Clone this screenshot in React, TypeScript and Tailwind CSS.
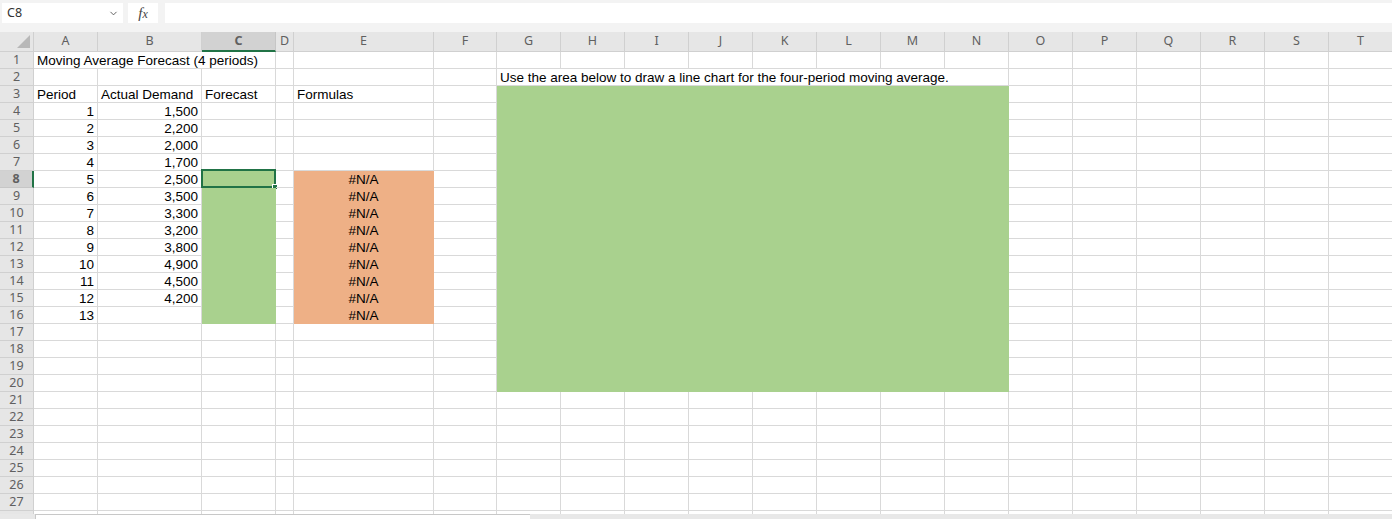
import {ChevronDown} from 'lucide-react';
import type {ReactNode} from 'react';

interface Column {
  label: string;
  width: number;
}

const columns: Column[] = [
  {label: 'A', width: 64},
  {label: 'B', width: 104},
  {label: 'C', width: 74},
  {label: 'D', width: 18},
  {label: 'E', width: 140},
  {label: 'F', width: 63},
  ...'GHIJKLMNOPQRST'.split('').map(label => ({label, width: 64})),
];

const demand = [
  '1,500',
  '2,200',
  '2,000',
  '1,700',
  '2,500',
  '3,500',
  '3,300',
  '3,200',
  '3,800',
  '4,900',
  '4,500',
  '4,200',
  '',
];

const cellFont =
  "font-['Liberation_Sans',Arial,sans-serif] text-[13.5px] leading-[17px] text-black";
const headerFont =
  "font-['Noto_Sans','Open_Sans',sans-serif] text-[12.5px] text-[#606060]";

interface CellProps {
  children?: ReactNode;
  className?: string;
  fill?: 'green' | 'orange';
}

function Cell({children, className = '', fill}: CellProps) {
  const fillClass =
    fill === 'green'
      ? 'border-[#a9d18e] bg-[#a9d18e]'
      : fill === 'orange'
        ? 'border-[#eeb086] bg-[#eeb086]'
        : 'border-[#d9d9d9]';
  return (
    <div
      className={`relative overflow-visible whitespace-nowrap border-r border-b px-[3px] ${fillClass} ${cellFont} ${className}`}
    >
      {children}
    </div>
  );
}

function RowHeader({row}: {row: number}) {
  const selected = row === 8;
  return (
    <div
      className={`flex items-center justify-center border-b border-r ${headerFont} ${
        selected
          ? 'border-b-[#c6c6c6] border-r-2 border-r-[#217346] bg-[#d2d2d2] font-bold text-[#217346]'
          : 'border-[#d0d0d0] bg-[#e6e6e6]'
      }`}
    >
      {row < 28 ? row : ''}
    </div>
  );
}

function renderRow(row: number) {
  const cells: ReactNode[] = [<RowHeader key="h" row={row} />];
  const inChartArea = row >= 3 && row <= 20;

  columns.forEach((col, i) => {
    const key = `${col.label}${row}`;

    // A1 title runs over B and C
    if (row === 1) {
      if (col.label === 'A') {
        cells.push(
          <Cell key={key} className="col-span-3">
            Moving Average Forecast (4 periods)
          </Cell>
        );
        return;
      }
      if (col.label === 'B' || col.label === 'C') return;
    }

    if (row === 2 && i >= 6 && i <= 13) {
      if (col.label === 'G') {
        cells.push(
          <Cell key={key} className="col-span-8">
            Use the area below to draw a line chart for the four-period moving
            average.
          </Cell>
        );
      }
      return;
    }

    if (inChartArea && i >= 6 && i <= 13) {
      if (row === 3 && col.label === 'G') {
        cells.push(
          <div key={key} className="col-span-8 row-span-18 bg-[#a9d18e]" />
        );
      }
      return;
    }

    if (row === 3) {
      const text: Record<string, string> = {
        A: 'Period',
        B: 'Actual Demand',
        C: 'Forecast',
        E: 'Formulas',
      };
      cells.push(<Cell key={key}>{text[col.label]}</Cell>);
      return;
    }

    if (row >= 4 && row <= 16) {
      const idx = row - 4;
      if (col.label === 'A') {
        cells.push(
          <Cell key={key} className="text-right">
            {idx + 1}
          </Cell>
        );
        return;
      }
      if (col.label === 'B') {
        cells.push(
          <Cell key={key} className="text-right">
            {demand[idx]}
          </Cell>
        );
        return;
      }
      if (col.label === 'C' && row >= 8) {
        cells.push(
          <Cell key={key} fill="green">
            {row === 8 && (
              <>
                <div className="absolute -top-[2px] -left-[1px] h-[19px] w-[75px] border-2 border-[#217346]" />
                <div className="absolute -right-[3px] -bottom-[3px] h-[6px] w-[6px] border border-white bg-[#217346]" />
              </>
            )}
          </Cell>
        );
        return;
      }
      if (col.label === 'E' && row >= 8) {
        cells.push(
          <Cell key={key} fill="orange" className="text-center">
            #N/A
          </Cell>
        );
        return;
      }
    }

    cells.push(<Cell key={key} />);
  });

  return cells;
}

function FormulaBar() {
  return (
    <div className="flex h-[32px] items-start gap-[4px] bg-[#f3f3f3] pt-[3px] pl-[2px]">
      <div className="flex h-[20px] w-[121px] items-center justify-between bg-white pr-[4px] pl-[5px]">
        <span className="font-['Noto_Sans',sans-serif] text-[12.5px] text-[#333]">
          C8
        </span>
        <ChevronDown size={11} strokeWidth={2} className="text-[#555]" />
      </div>
      <div className="ml-[1px] flex h-[20px] w-[30px] items-center justify-center bg-white">
        <span className="font-['Liberation_Serif',serif] text-[15px] leading-none text-[#444] italic">
          f<span className="text-[12px]">x</span>
        </span>
      </div>
      <div className="ml-[3px] h-[20px] flex-1 bg-white" />
    </div>
  );
}

export default function App() {
  const rows = Array.from({length: 28}, (_, i) => i + 1);

  return (
    <div className="h-[519px] w-[1392px] overflow-hidden bg-white">
      <FormulaBar />
      <div className="grid h-[482px] grid-cols-[34px_64px_104px_74px_18px_140px_63px_repeat(14,64px)] grid-rows-[20px_repeat(28,17px)] overflow-hidden">
        <div className="relative border-r border-b border-[#d0d0d0] bg-[#e6e6e6]">
          <svg
            className="absolute right-[3px] bottom-[3px]"
            width="13"
            height="13"
            viewBox="0 0 13 13"
          >
            <polygon points="13,0 13,13 0,13" fill="#b8b8b8" />
          </svg>
        </div>
        {columns.map(col => (
          <div
            key={col.label}
            className={`flex items-center justify-center border-r ${headerFont} ${
              col.label === 'C'
                ? 'border-b-2 border-r-[#c6c6c6] border-b-[#217346] bg-[#d2d2d2] font-bold text-[#217346]'
                : 'border-b border-[#d0d0d0] bg-[#e6e6e6]'
            }`}
          >
            {col.label}
          </div>
        ))}
        {rows.map(row => renderRow(row))}
      </div>
      <div className="flex h-[5px] bg-[#e8e8e8]">
        <div className="ml-[35px] w-[495px] border-t border-l border-[#c8c8c8] bg-white" />
      </div>
    </div>
  );
}
